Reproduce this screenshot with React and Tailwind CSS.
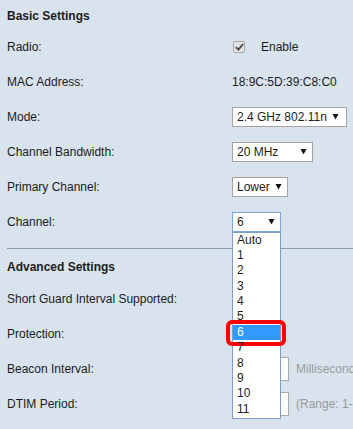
import React from "react";

function Arrow() {
  return (
    <svg width="7" height="6" viewBox="0 0 7 6" className="shrink-0">
      <polygon points="0.5,0 6.5,0 3.5,5.5" fill="#111" />
    </svg>
  );
}

function Select({ value, w, focus = false, pr = "pr-[5px]", children }) {
  return (
    <div
      className={`relative flex h-[20px] items-center justify-between bg-white pl-[4px] border ${pr} ${
        focus ? "border-[#7fa6d8]" : "border-[#a3a3a3]"
      } ${w}`}
    >
      <span className="whitespace-nowrap">{value}</span>
      <Arrow />
      {children}
    </div>
  );
}

function Row({ label, children }) {
  return (
    <div className="grid h-[35px] grid-cols-[225px_1fr] items-center pl-[7px]">
      <div className="whitespace-nowrap">{label}</div>
      <div className="flex items-center">{children}</div>
    </div>
  );
}

const items = ["Auto", "1", "2", "3", "4", "5", "6", "7", "8", "9", "10", "11"];

export default function App() {
  return (
    <div className="relative h-[429px] w-[353px] overflow-hidden bg-[#d8e3ee] font-['Liberation_Sans',Arial,sans-serif] text-[12px] text-[#1c1c1c]">
      <div className="flex h-[29px] items-center pl-[7px] pt-[2px] font-bold">Basic Settings</div>
      <Row label="Radio:">
        <div className="ml-[1px] flex h-[12px] w-[12px] items-center justify-center rounded-[2px] border border-[#a8a8a8] bg-[#e2e2e2]">
          <svg width="9" height="8" viewBox="0 0 9 8">
            <path d="M1 4.2 L3.4 6.6 L8 1.2" stroke="#4a4a4a" strokeWidth="1.8" fill="none" />
          </svg>
        </div>
        <span className="ml-[16px]">Enable</span>
      </Row>
      <Row label="MAC Address:">
        <span>18:9C:5D:39:C8:C0</span>
      </Row>
      <Row label="Mode:">
        <Select value="2.4 GHz 802.11n" w="w-[115px]" pr="pr-[7px]" />
      </Row>
      <Row label="Channel Bandwidth:">
        <Select value="20 MHz" w="w-[81px]" />
      </Row>
      <Row label="Primary Channel:">
        <Select value="Lower" w="w-[56px]" />
      </Row>
      <Row label="Channel:">
        <Select value="6" w="w-[49px]" focus>
          <div className="absolute left-[-1px] top-[19px] z-10 h-[187px] w-[49px] border border-[#7f9fc8] bg-white">
            {items.map((it) => (
              <div
                key={it}
                className={`relative h-[15.4px] pl-[4px] leading-[15.4px] ${
                  it === "6" ? "bg-[#3399ff] text-white" : "text-[#1c1c1c]"
                }`}
              >
                {it}
                {it === "6" && (
                  <div className="absolute left-[-7px] right-[-6px] top-[-4.5px] bottom-[-6px] rounded-[6px] border-4 border-[#f00]" />
                )}
              </div>
            ))}
          </div>
        </Select>
      </Row>
      <div className="ml-[7px] mt-[9px] h-px bg-[#8b9aab]" />
      <div className="flex h-[32px] items-center pl-[7px] pt-[4px] font-bold">Advanced Settings</div>
      <Row label="Short Guard Interval Supported:" />
      <Row label="Protection:" />
      <Row label="Beacon Interval:">
        <div className="h-[24px] w-[57px] shrink-0 border border-[#aaaaaa] bg-white" />
        <span className="ml-[7px] whitespace-nowrap text-[#9a9a9a]">Milliseconds</span>
      </Row>
      <Row label="DTIM Period:">
        <div className="h-[24px] w-[57px] shrink-0 border border-[#aaaaaa] bg-white" />
        <span className="ml-[7px] whitespace-nowrap text-[#9a9a9a]">(Range: 1-255)</span>
      </Row>
    </div>
  );
}
